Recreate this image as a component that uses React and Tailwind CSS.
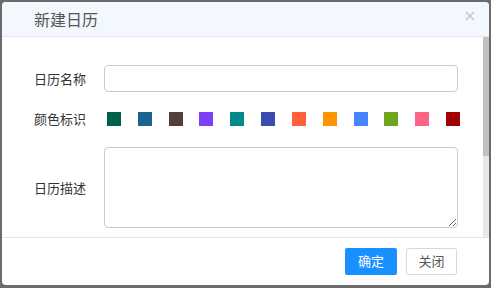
import React from 'react';

const swatches = [
  '#00604a', '#1c6490', '#523f38', '#7d3ff8', '#00898b', '#3b4bb0',
  '#ff5f3b', '#ff9400', '#4684ff', '#6ca51f', '#ff6383', '#a00000',
];

const font = { fontFamily: '"Noto Sans CJK SC", "Liberation Sans", sans-serif' };

const App = () => {
  return (
    <div className="w-[491px] h-[288px] bg-[#6b6b6b] pt-[2px] pl-[2px] pr-[2px] pb-[3px]" style={font}>
      <div className="w-[487px] h-[283px] bg-white rounded-[4px] overflow-hidden flex flex-col">
        {/* header */}
        <div className="h-[35px] shrink-0 bg-[#f3f8fe] border-b border-[#e4e9ef] flex items-center justify-between pl-[32px] pr-[14px]">
          <span className="text-[16px] text-[#555] leading-none">新建日历</span>
          <svg width="10" height="10" viewBox="0 0 10 10" className="mb-[6px]">
            <path d="M1 1 L9 9 M9 1 L1 9" stroke="#c4c4c4" strokeWidth="1.4" />
          </svg>
        </div>

        {/* body with scrollbar */}
        <div className="h-[200px] shrink-0 flex">
          <div className="flex-1 overflow-hidden pt-[28px] pr-[25px] flex flex-col">
            <div className="flex items-center h-[27px]">
              <label className="w-[84px] shrink-0 text-right text-[13px] text-[#333]">日历名称</label>
              <input className="ml-[18px] flex-1 min-w-0 h-[27px] border border-[#cccccc] rounded-[4px] outline-none" />
            </div>
            <div className="flex items-center h-[14px] mt-[20px]">
              <label className="w-[84px] shrink-0 text-right text-[13px] text-[#333]">颜色标识</label>
              <div className="ml-[21px] w-[353px] shrink-0 flex justify-between">
                {swatches.map((c) => (
                  <span key={c} className="block w-[14px] h-[14px]" style={{ backgroundColor: c }} />
                ))}
              </div>
            </div>
            <div className="flex items-center mt-[21px]">
              <label className="w-[84px] shrink-0 text-right text-[13px] text-[#333]">日历描述</label>
              <textarea className="ml-[18px] flex-1 min-w-0 h-[81px] shrink-0 border border-[#cccccc] rounded-[4px] outline-none" />
            </div>
          </div>
          <div className="w-[6px] shrink-0 bg-[#e8e8e8]">
            <div className="h-[119px] bg-[#c1c1c1]" />
          </div>
        </div>

        {/* footer */}
        <div className="flex-1 border-t border-[#e5e5e5] flex items-center justify-end gap-[9px] pr-[32px] pb-[1px]">
          <button className="w-[52px] h-[27px] bg-[#1890ff] text-white text-[13px] rounded-[2px]">确定</button>
          <button className="w-[51px] h-[27px] bg-white border border-[#d9d9d9] text-[#555] text-[13px] rounded-[2px]">关闭</button>
        </div>
      </div>
    </div>
  );
};

export default App;
